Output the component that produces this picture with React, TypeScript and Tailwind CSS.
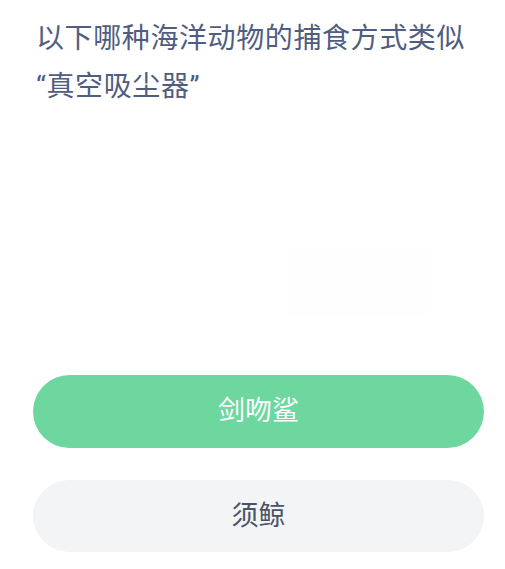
export default function App() {
  return (
    <div
      className="flex h-[569px] w-[505px] flex-col bg-white"
      style={{ fontFamily: 'Roboto, "Noto Sans CJK SC", sans-serif' }}
    >
      {/* Question */}
      <h1 className="pl-[36px] pr-[30px] pt-[15px] text-[28px] font-normal leading-[48px] tracking-[0.6px] text-[#4f5d80]">
        以下哪种海洋动物的捕食方式类似
        <br />
        “真空吸尘器”
      </h1>

      {/* faint image placeholder */}
      <div className="flex h-[264px] items-end pb-[58px] pl-[287px]">
        <div className="h-[69px] w-[140px] bg-[#fefefe]" />
      </div>

      {/* Options */}
      <div className="flex flex-col gap-[32px] pl-[33px]">
        <button className="flex h-[73px] w-[451px] items-center justify-center rounded-full bg-[#6dd79f] text-[27px] text-white">
          剑吻鲨
        </button>
        <button className="flex h-[72px] w-[451px] items-center justify-center rounded-full bg-[#f3f4f6] text-[27px] text-[#4a5366]">
          须鲸
        </button>
      </div>
    </div>
  )
}
